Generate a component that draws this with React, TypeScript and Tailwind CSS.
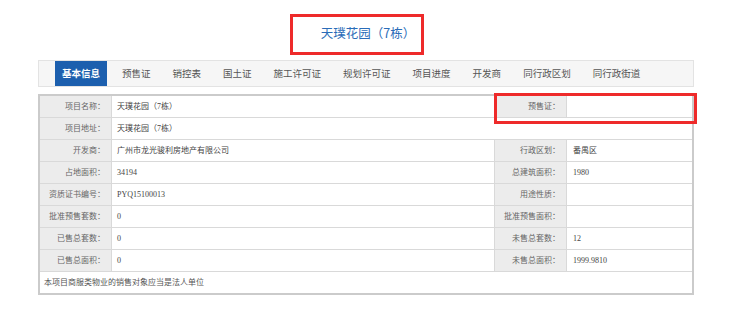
const tabs = ["预售证", "销控表", "国土证", "施工许可证", "规划许可证", "项目进度", "开发商", "同行政区划", "同行政街道"];

type Row = { l1: string; v1: string; l2?: string; v2?: string; full?: boolean };

const rows: Row[] = [
  { l1: "项目名称：", v1: "天璞花园（7栋）", l2: "预售证：", v2: "" },
  { l1: "项目地址：", v1: "天璞花园（7栋）", full: true },
  { l1: "开发商：", v1: "广州市龙光骏利房地产有限公司", l2: "行政区划：", v2: "番禺区" },
  { l1: "占地面积：", v1: "34194", l2: "总建筑面积：", v2: "1980" },
  { l1: "资质证书编号：", v1: "PYQ15100013", l2: "用途性质：", v2: "" },
  { l1: "批准预售套数：", v1: "0", l2: "批准预售面积：", v2: "" },
  { l1: "已售总套数：", v1: "0", l2: "未售总套数：", v2: "12" },
  { l1: "已售总面积：", v1: "0", l2: "未售总面积：", v2: "1999.9810" },
];

const labelCls =
  "shrink-0 w-[72px] border-r border-[#d9d9d9] bg-[#ececec] text-right pr-[6px] text-[#666] flex items-center justify-end";

export default function App() {
  return (
    <div className="relative w-[744px] h-[323px] bg-white overflow-hidden font-['Noto_Sans_CJK_SC',sans-serif]">
      <div className="h-[60px] flex items-center justify-center pt-[6px] pr-[8px]">
        <h1 className="text-[12.5px] text-[#2a6cb8]">天璞花园（7栋）</h1>
      </div>

      <div className="ml-[38px] w-[656px] h-[27px] border border-[#e3e3e3] bg-[#f6f6f6] flex pl-[16px] text-[9.5px] text-[#555]">
        <div className="px-[7px] mr-[4px] bg-[#1c5fae] text-white font-bold flex items-center">基本信息</div>
        {tabs.map((t) => (
          <div key={t} className="px-[11px] flex items-center">
            {t}
          </div>
        ))}
      </div>

      <div className="ml-[38px] mt-[7px] w-[656px] border-2 border-[#cbcbcb] text-[8px] text-[#444] font-['Liberation_Serif','Noto_Sans_CJK_SC',serif]">
        {rows.map((r) => (
          <div key={r.l1} className="flex h-[22px] border-b border-[#d9d9d9]">
            <div className={labelCls}>{r.l1}</div>
            {r.full ? (
              <div className="flex-1 pl-[5px] flex items-center">{r.v1}</div>
            ) : (
              <>
                <div className="shrink-0 w-[383px] border-r border-[#d9d9d9] pl-[5px] flex items-center">{r.v1}</div>
                <div className={labelCls}>{r.l2}</div>
                <div className="flex-1 pl-[6px] flex items-center">{r.v2}</div>
              </>
            )}
          </div>
        ))}
        <div className="h-[21px] pl-[4px] flex items-center text-[#555]">本项目商服类物业的销售对象应当是法人单位</div>
      </div>

      <div className="absolute left-[290px] top-[14px] w-[134px] h-[41px] border-[3px] border-[#ee2a2a]" />
      <div className="absolute left-[494px] top-[93px] w-[203px] h-[31px] border-[3px] border-[#ee2a2a]" />
    </div>
  );
}
